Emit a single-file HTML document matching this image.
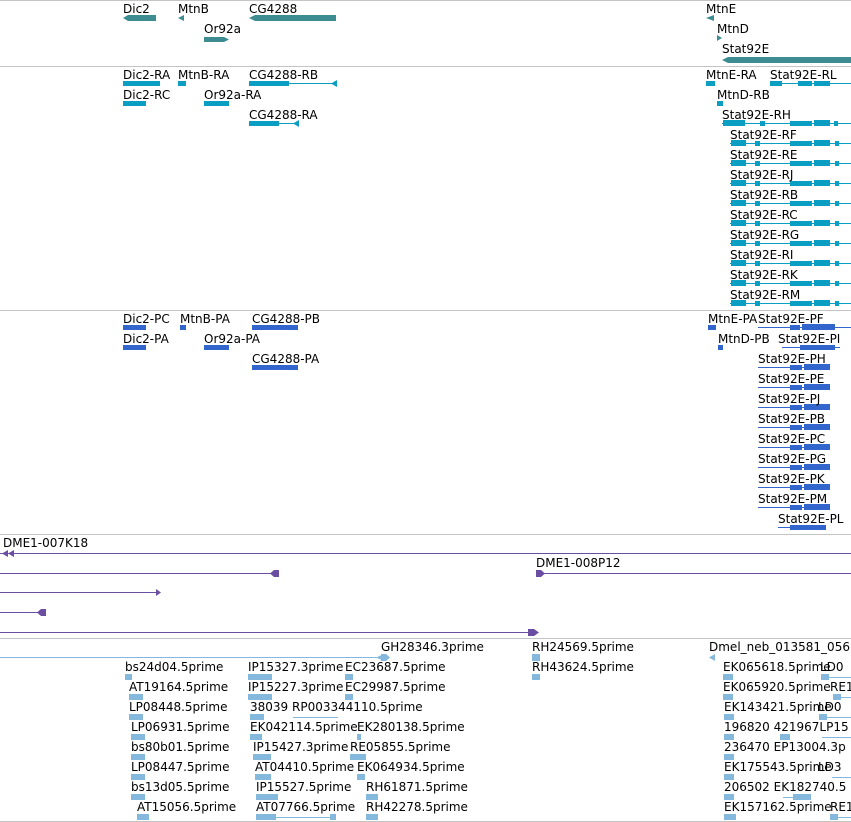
<!DOCTYPE html>
<html><head><meta charset="utf-8"><style>
body{margin:0;width:851px;height:822px;background:#fff;overflow:hidden;position:relative;font-family:"DejaVu Sans","Liberation Sans",sans-serif;font-size:12px;color:#000}
.t{position:absolute;white-space:nowrap;line-height:14px}
svg{position:absolute;left:0;top:0}
</style></head><body>
<svg width="851" height="822">
<g fill="#c4c4c4"><rect x="0" y="0" width="851" height="1"/><rect x="0" y="66" width="851" height="1"/><rect x="0" y="310" width="851" height="1"/><rect x="0" y="534" width="851" height="1"/><rect x="0" y="638" width="851" height="1"/><rect x="0" y="821" width="851" height="1"/></g>
<!-- genes -->
<g fill="#3d8c91">
<polygon points="123,18 128,15 156,15 156,21 128,21"/>
<polygon points="178,18 184,15 184,21"/>
<polygon points="249,18 255,15 336,15 336,21 255,21"/>
<polygon points="204,37 224,37 229,39.5 224,42 204,42"/>
<polygon points="706,18 714,15 714,21"/>
<polygon points="717,35 722,38 717,41"/>
<polygon points="722,60 728,57 851,57 851,63 728,63"/>
</g>
<!-- transcripts -->
<g fill="#0b9ec3">
<rect x="123" y="81" width="37" height="5"/><rect x="178" y="81" width="8" height="5"/>
<rect x="249" y="81" width="40" height="5"/><rect x="249" y="83" width="88" height="1"/><polygon points="331,83.5 337,80 337,87"/>
<rect x="123" y="101" width="23" height="5"/><rect x="204" y="101" width="25" height="5"/>
<rect x="249" y="121" width="30" height="5"/><rect x="249" y="123" width="50" height="1"/><polygon points="293,123.5 299,120 299,127"/>
<rect x="706" y="81" width="9" height="5"/>
<rect x="770" y="83" width="81" height="1"/><rect x="770" y="81" width="12" height="5"/><rect x="798" y="81" width="14" height="5"/><rect x="814" y="81" width="16" height="5"/>
<rect x="717" y="101" width="6" height="5"/>
<rect x="722" y="123" width="129" height="1"/><rect x="723" y="120" width="22" height="6"/><rect x="760" y="121" width="5" height="5"/><rect x="790" y="121" width="22" height="5"/><rect x="814" y="120" width="16" height="6"/><rect x="834" y="121" width="4" height="5"/>
</g>
<g fill="#0b9ec3" id="rs">
<g><rect x="730" y="143" width="121" height="1"/><rect x="731" y="140" width="15" height="6"/><rect x="755" y="141" width="5" height="5"/><rect x="790" y="141" width="22" height="5"/><rect x="814" y="140" width="16" height="6"/><rect x="835" y="141" width="4" height="5"/></g>
</g>
<use href="#rs" y="20"/><use href="#rs" y="40"/><use href="#rs" y="60"/><use href="#rs" y="80"/><use href="#rs" y="100"/><use href="#rs" y="120"/><use href="#rs" y="140"/><use href="#rs" y="160"/>
<!-- proteins -->
<g fill="#3366cc">
<rect x="123" y="325" width="23" height="5"/><rect x="180" y="325" width="6" height="5"/><rect x="252" y="325" width="46" height="5"/>
<rect x="123" y="345" width="23" height="5"/><rect x="204" y="345" width="25" height="5"/>
<rect x="252" y="365" width="46" height="5"/>
<rect x="708" y="325" width="8" height="5"/><rect x="758" y="327" width="93" height="1"/><rect x="790" y="325" width="10" height="5"/><rect x="802" y="324" width="33" height="6"/>
<rect x="718" y="345" width="5" height="5"/><rect x="782" y="347" width="58" height="1"/><rect x="800" y="345" width="35" height="5"/>
</g>
<g fill="#3366cc" id="ps"><g><rect x="758" y="367" width="72" height="1"/><rect x="790" y="365" width="12" height="5"/><rect x="804" y="364" width="26" height="6"/></g></g>
<use href="#ps" y="20"/><use href="#ps" y="40"/><use href="#ps" y="60"/><use href="#ps" y="80"/><use href="#ps" y="100"/><use href="#ps" y="120"/><use href="#ps" y="140"/>
<g fill="#3366cc"><rect x="778" y="527" width="48" height="1"/><rect x="790" y="525" width="36" height="5"/></g>
<!-- clones -->
<g fill="#6b4ea2">
<rect x="0" y="553" width="851" height="1"/><polygon points="2,553.5 8,550 8,557"/><polygon points="8,553.5 14,550 14,557"/>
<rect x="0" y="573" width="278" height="1"/><polygon points="270,573.5 274,570 279,570 279,577 274,577"/>
<rect x="536" y="573" width="315" height="1"/><polygon points="536,570 541,570 545,573.5 541,577 536,577"/>
<rect x="0" y="592" width="160" height="1"/><polygon points="156,589 161,592.5 156,596"/>
<rect x="0" y="612" width="45" height="1"/><polygon points="37,612.5 41,609 46,609 46,616 41,616"/>
<rect x="0" y="632" width="538" height="1"/><polygon points="528,629 534,629 539,632.5 534,636 528,636"/>
</g>
<!-- ESTs -->
<g fill="#84b8dc">
<rect x="0" y="657" width="384" height="1"/><polygon points="376,657.5 384,654 384,661"/><polygon points="381,654 386,654 390,657.5 386,661 381,661"/>
<rect x="532" y="654" width="8" height="7"/><polygon points="709,657.5 715,654 715,661"/>
<rect x="125" y="674" width="7" height="6"/><rect x="248" y="674" width="24" height="6"/><rect x="345" y="674" width="8" height="6"/><rect x="532" y="674" width="8" height="6"/><rect x="723" y="674" width="10" height="6"/><rect x="821" y="677" width="30" height="1"/><rect x="821" y="674" width="8" height="6"/>
<rect x="129" y="694" width="14" height="6"/><rect x="248" y="694" width="24" height="6"/><rect x="345" y="694" width="8" height="6"/><rect x="723" y="694" width="10" height="6"/><rect x="833" y="697" width="18" height="1"/><rect x="833" y="694" width="8" height="6"/>
<rect x="129" y="714" width="14" height="6"/><rect x="250" y="714" width="14" height="6"/><rect x="293" y="717" width="45" height="1"/><rect x="724" y="714" width="10" height="6"/><rect x="819" y="717" width="32" height="1"/><rect x="819" y="714" width="8" height="6"/>
<rect x="131" y="734" width="14" height="6"/><rect x="250" y="734" width="12" height="6"/><rect x="357" y="734" width="4" height="6"/><rect x="724" y="734" width="10" height="6"/><rect x="780" y="734" width="10" height="6"/><rect x="822" y="737" width="29" height="1"/>
<rect x="131" y="754" width="14" height="6"/><rect x="253" y="754" width="18" height="6"/><rect x="350" y="754" width="16" height="6"/><rect x="724" y="754" width="10" height="6"/>
<rect x="131" y="774" width="14" height="6"/><rect x="255" y="774" width="16" height="6"/><rect x="357" y="774" width="8" height="6"/><rect x="724" y="774" width="10" height="6"/><rect x="832" y="777" width="19" height="1"/>
<rect x="131" y="794" width="14" height="6"/><rect x="256" y="794" width="22" height="6"/><rect x="366" y="794" width="12" height="6"/><rect x="724" y="794" width="10" height="6"/><rect x="783" y="797" width="20" height="1"/><rect x="793" y="794" width="18" height="6"/>
<rect x="137" y="814" width="12" height="6"/><rect x="256" y="814" width="20" height="6"/><rect x="256" y="817" width="80" height="1"/><rect x="330" y="814" width="6" height="6"/><rect x="366" y="814" width="12" height="6"/><rect x="724" y="814" width="12" height="6"/><rect x="830" y="817" width="21" height="1"/><rect x="830" y="814" width="8" height="6"/>
</g>
</svg>
<div class="t" style="left:123px;top:2px">Dic2</div><div class="t" style="left:178px;top:2px">MtnB</div><div class="t" style="left:249px;top:2px">CG4288</div><div class="t" style="left:204px;top:22px">Or92a</div>
<div class="t" style="left:706px;top:2px">MtnE</div><div class="t" style="left:717px;top:22px">MtnD</div><div class="t" style="left:722px;top:42px">Stat92E</div>

<div class="t" style="left:123px;top:68px">Dic2-RA</div><div class="t" style="left:178px;top:68px">MtnB-RA</div><div class="t" style="left:249px;top:68px">CG4288-RB</div>
<div class="t" style="left:123px;top:88px">Dic2-RC</div><div class="t" style="left:204px;top:88px">Or92a-RA</div><div class="t" style="left:249px;top:108px">CG4288-RA</div>
<div class="t" style="left:706px;top:68px">MtnE-RA</div><div class="t" style="left:770px;top:68px">Stat92E-RL</div><div class="t" style="left:717px;top:88px">MtnD-RB</div><div class="t" style="left:722px;top:108px">Stat92E-RH</div>
<div class="t" style="left:730px;top:128px">Stat92E-RF</div><div class="t" style="left:730px;top:148px">Stat92E-RE</div><div class="t" style="left:730px;top:168px">Stat92E-RJ</div><div class="t" style="left:730px;top:188px">Stat92E-RB</div><div class="t" style="left:730px;top:208px">Stat92E-RC</div><div class="t" style="left:730px;top:228px">Stat92E-RG</div><div class="t" style="left:730px;top:248px">Stat92E-RI</div><div class="t" style="left:730px;top:268px">Stat92E-RK</div><div class="t" style="left:730px;top:288px">Stat92E-RM</div>

<div class="t" style="left:123px;top:312px">Dic2-PC</div><div class="t" style="left:180px;top:312px">MtnB-PA</div><div class="t" style="left:252px;top:312px">CG4288-PB</div>
<div class="t" style="left:123px;top:332px">Dic2-PA</div><div class="t" style="left:204px;top:332px">Or92a-PA</div><div class="t" style="left:252px;top:352px">CG4288-PA</div>
<div class="t" style="left:708px;top:312px">MtnE-PA</div><div class="t" style="left:758px;top:312px">Stat92E-PF</div><div class="t" style="left:718px;top:332px">MtnD-PB</div><div class="t" style="left:778px;top:332px">Stat92E-PI</div>
<div class="t" style="left:758px;top:352px">Stat92E-PH</div><div class="t" style="left:758px;top:372px">Stat92E-PE</div><div class="t" style="left:758px;top:392px">Stat92E-PJ</div><div class="t" style="left:758px;top:412px">Stat92E-PB</div><div class="t" style="left:758px;top:432px">Stat92E-PC</div><div class="t" style="left:758px;top:452px">Stat92E-PG</div><div class="t" style="left:758px;top:472px">Stat92E-PK</div><div class="t" style="left:758px;top:492px">Stat92E-PM</div><div class="t" style="left:778px;top:512px">Stat92E-PL</div>

<div class="t" style="left:3px;top:536px">DME1-007K18</div><div class="t" style="left:536px;top:556px">DME1-008P12</div>

<div class="t" style="left:381px;top:640px">GH28346.3prime</div><div class="t" style="left:532px;top:640px">RH24569.5prime</div><div class="t" style="left:709px;top:640px">Dmel_neb_013581_056</div>
<div class="t" style="left:125px;top:660px">bs24d04.5prime</div><div class="t" style="left:248px;top:660px">IP15327.3prime</div><div class="t" style="left:345px;top:660px">EC23687.5prime</div><div class="t" style="left:532px;top:660px">RH43624.5prime</div><div class="t" style="left:723px;top:660px">EK065618.5prime</div><div class="t" style="left:820px;top:660px">LD0</div>
<div class="t" style="left:129px;top:680px">AT19164.5prime</div><div class="t" style="left:248px;top:680px">IP15227.3prime</div><div class="t" style="left:345px;top:680px">EC29987.5prime</div><div class="t" style="left:723px;top:680px">EK065920.5prime</div><div class="t" style="left:830px;top:680px">RE1</div>
<div class="t" style="left:129px;top:700px">LP08448.5prime</div><div class="t" style="left:250px;top:700px">38039 RP003344110.5prime</div><div class="t" style="left:724px;top:700px">EK143421.5prime</div><div class="t" style="left:818px;top:700px">LD0</div>
<div class="t" style="left:131px;top:720px">LP06931.5prime</div><div class="t" style="left:250px;top:720px">EK042114.5prime</div><div class="t" style="left:357px;top:720px">EK280138.5prime</div><div class="t" style="left:724px;top:720px">196820 421967LP15</div>
<div class="t" style="left:131px;top:740px">bs80b01.5prime</div><div class="t" style="left:253px;top:740px">IP15427.3prime</div><div class="t" style="left:350px;top:740px">RE05855.5prime</div><div class="t" style="left:724px;top:740px">236470 EP13004.3p</div>
<div class="t" style="left:131px;top:760px">LP08447.5prime</div><div class="t" style="left:255px;top:760px">AT04410.5prime</div><div class="t" style="left:357px;top:760px">EK064934.5prime</div><div class="t" style="left:724px;top:760px">EK175543.5prime</div><div class="t" style="left:818px;top:760px">LD3</div>
<div class="t" style="left:131px;top:780px">bs13d05.5prime</div><div class="t" style="left:256px;top:780px">IP15527.5prime</div><div class="t" style="left:366px;top:780px">RH61871.5prime</div><div class="t" style="left:724px;top:780px">206502 EK182740.5</div>
<div class="t" style="left:137px;top:800px">AT15056.5prime</div><div class="t" style="left:256px;top:800px">AT07766.5prime</div><div class="t" style="left:366px;top:800px">RH42278.5prime</div><div class="t" style="left:724px;top:800px">EK157162.5prime</div><div class="t" style="left:830px;top:800px">RE1</div>
</body></html>
